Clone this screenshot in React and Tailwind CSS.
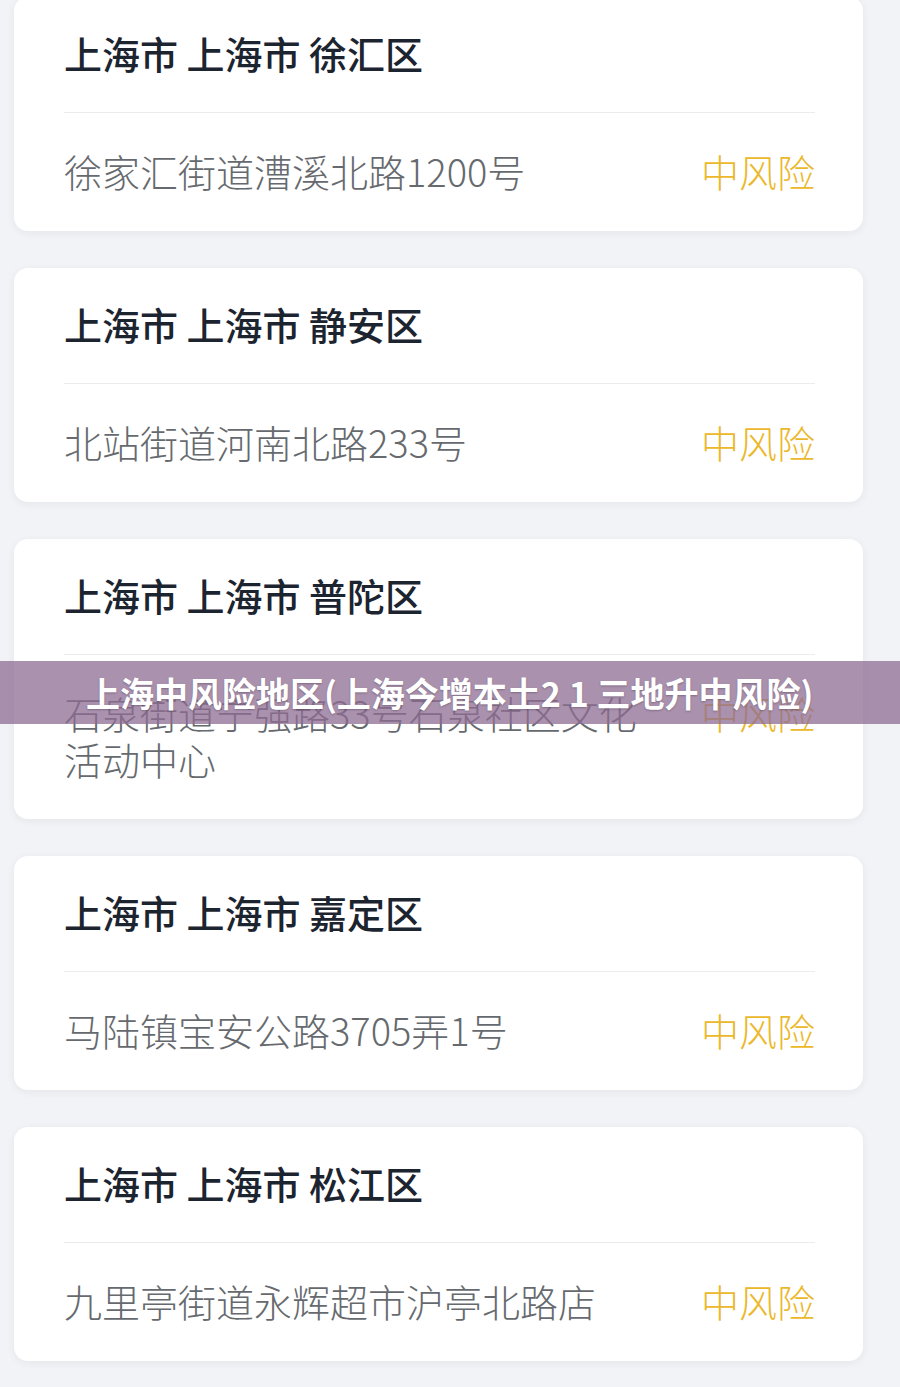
const AREAS = [
  { city: '上海市 上海市 徐汇区', addr: '徐家汇街道漕溪北路1200号' },
  { city: '上海市 上海市 静安区', addr: '北站街道河南北路233号' },
  { city: '上海市 上海市 普陀区', addr: '石泉街道宁强路33号石泉社区文化活动中心' },
  { city: '上海市 上海市 嘉定区', addr: '马陆镇宝安公路3705弄1号' },
  { city: '上海市 上海市 松江区', addr: '九里亭街道永辉超市沪亭北路店' },
]

const FONT = '"Noto Sans CJK SC", "Noto Sans", sans-serif'

function AreaCard({ city, addr }) {
  return (
    <div className="bg-white rounded-[14px] shadow-[0_2px_8px_rgba(30,40,60,0.06)] pl-[50px] pr-[48px] pt-[33px] pb-[37px]">
      <h2 className="text-[38px] leading-[46px] font-medium text-[#1c2430] whitespace-nowrap">{city}</h2>
      <div className="h-px bg-[#ececee] mt-[36px] mb-[35px]" />
      <div className="flex items-start justify-between gap-10">
        <p className="flex-1 text-[38px] leading-[46px] font-light text-[#666a6e]">{addr}</p>
        <span className="text-[38px] leading-[46px] font-light text-[#ebb82c] whitespace-nowrap">中风险</span>
      </div>
    </div>
  )
}

export default function App() {
  return (
    <div className="relative min-h-[1387px] bg-[#f1f3f6] overflow-hidden" style={{ fontFamily: FONT }}>
      <div className="flex flex-col gap-[37px] pl-[14px] pr-[37px] -mt-[3px] pb-10">
        {AREAS.map(a => <AreaCard key={a.addr} {...a} />)}
      </div>

      {/* title banner laid over the list */}
      <div className="absolute left-0 right-0 top-[661px] h-[63px] bg-[#8e6c93]/75 flex items-center pl-[86px]">
        <span className="text-white text-[34px] font-bold whitespace-nowrap [text-shadow:0_1px_2px_rgba(0,0,0,0.25)]">
          上海中风险地区(上海今增本土2 1 三地升中风险)
        </span>
      </div>
    </div>
  )
}
